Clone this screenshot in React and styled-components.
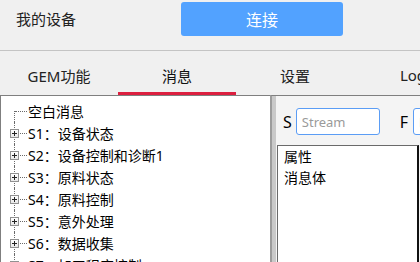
import styled, { createGlobalStyle } from "styled-components";

const GlobalStyle = createGlobalStyle`
  html, body {
    margin: 0;
    padding: 0;
    width: 420px;
    height: 262px;
    overflow: hidden;
    background: #f0f0f0;
  }

  body {
    font-family: "Noto Sans", "Noto Sans CJK SC", sans-serif;
    color: #000;
  }

  * {
    box-sizing: border-box;
  }
`;

const Page = styled.div`
  width: 420px;
  height: 262px;
  display: flex;
  flex-direction: column;
  overflow: hidden;
`;

const Header = styled.div`
  height: 51px;
  flex-shrink: 0;
  display: flex;
  align-items: flex-start;
  padding: 2px 0 0 16px;
  border-bottom: 1px solid #c4c4c4;
`;

const Title = styled.div`
  width: 165px;
  height: 34px;
  line-height: 34px;
  font-size: 15px;
  color: #222;
`;

const ConnectButton = styled.button`
  width: 162px;
  height: 34px;
  border: none;
  border-radius: 3px;
  background: #52a2ff;
  color: #fff;
  font-family: inherit;
  font-size: 16px;
  cursor: pointer;
`;

const Tabs = styled.div`
  height: 44px;
  flex-shrink: 0;
  display: flex;
`;

const Tab = styled.div`
  width: 118px;
  flex-shrink: 0;
  display: flex;
  justify-content: center;
  padding-top: 14px;
  font-size: 15px;
  color: ${(p) => (p.$active ? "#111" : "#222")};
  border-bottom: 3px solid ${(p) => (p.$active ? "#dc1f3f" : "transparent")};
`;

const Body = styled.div`
  flex: 1;
  display: flex;
  min-height: 0;
`;

const Tree = styled.div`
  width: 270px;
  flex-shrink: 0;
  background: #fff;
  border-top: 1px solid #7f7f7f;
  border-left: 1px solid #7f7f7f;
  padding: 4px 0 0 9px;
  overflow: hidden;
`;

const Row = styled.div`
  height: 22px;
  display: flex;
  align-items: center;
  font-size: 14px;
  white-space: nowrap;
`;

const Gutter = styled.div`
  position: relative;
  width: 18px;
  height: 22px;
  flex-shrink: 0;

  &::before {
    content: "";
    position: absolute;
    left: 4px;
    top: ${(p) => (p.$first ? "11px" : "0")};
    bottom: 0;
    border-left: 1px dotted #6a6a6a;
  }

  &::after {
    content: "";
    position: absolute;
    left: 5px;
    width: 12px;
    top: 11px;
    border-top: 1px dotted #6a6a6a;
  }
`;

const Expander = styled.span`
  position: absolute;
  left: 0;
  top: 7px;
  width: 9px;
  height: 9px;
  border: 1px solid #919191;
  background: linear-gradient(#fff, #e8e8e8);
  z-index: 1;

  &::before {
    content: "";
    position: absolute;
    left: 1px;
    top: 3px;
    width: 5px;
    height: 1px;
    background: #222;
  }

  &::after {
    content: "";
    position: absolute;
    left: 3px;
    top: 1px;
    width: 1px;
    height: 5px;
    background: #222;
  }
`;

const Splitter = styled.div`
  width: 6px;
  flex-shrink: 0;
  border-left: 2px solid #9c9c9c;
  background: #c9c9c9;
  border-top: 1px solid #7f7f7f;
`;

const Side = styled.div`
  flex: 1;
  min-width: 0;
  background: #f4f4f4;
  border-top: 1px solid #7f7f7f;
  padding: 12px 0 0 1px;
  display: flex;
  flex-direction: column;
  gap: 10px;
`;

const FieldRow = styled.div`
  display: flex;
  align-items: center;
  padding-left: 6px;
  white-space: nowrap;
`;

const Label = styled.span`
  font-size: 16px;
  margin-right: ${(p) => p.$gap}px;
`;

const Input = styled.input`
  width: 84px;
  height: 27px;
  flex-shrink: 0;
  border: 1px solid #5b9df5;
  border-radius: 3px;
  background: #fff;
  padding: 0 5px;
  font-family: inherit;
  font-size: 13px;
  outline: none;
  margin-right: ${(p) => p.$gap || 0}px;

  &::placeholder {
    color: #9a9a9a;
  }
`;

const List = styled.div`
  width: 142px;
  flex: 1;
  background: #fff;
  border: 1px solid #6a6a6a;
  border-right: 2px solid #111;
  border-bottom: none;
  padding: 0 6px;
`;

const ListItem = styled.div`
  height: 21px;
  line-height: 21px;
  font-size: 14px;
`;

const tabs = ["GEM功能", "消息", "设置", "Log"];

const nodes = [
  "S1：设备状态",
  "S2：设备控制和诊断1",
  "S3：原料状态",
  "S4：原料控制",
  "S5：意外处理",
  "S6：数据收集",
  "S7：加工程序控制",
];

export default function App() {
  return (
    <>
      <GlobalStyle />
      <Page>
        <Header>
          <Title>我的设备</Title>
          <ConnectButton>连接</ConnectButton>
        </Header>

        <Tabs>
          {tabs.map((t) => (
            <Tab key={t} $active={t === "消息"}>
              {t}
            </Tab>
          ))}
        </Tabs>

        <Body>
          <Tree>
            <Row>
              <Gutter $first />
              <span>空白消息</span>
            </Row>
            {nodes.map((n) => (
              <Row key={n}>
                <Gutter>
                  <Expander />
                </Gutter>
                <span>{n}</span>
              </Row>
            ))}
          </Tree>

          <Splitter />

          <Side>
            <FieldRow>
              <Label $gap={4}>S</Label>
              <Input placeholder="Stream" $gap={20} />
              <Label $gap={5}>F</Label>
              <Input placeholder="Function" />
            </FieldRow>
            <List>
              <ListItem>属性</ListItem>
              <ListItem>消息体</ListItem>
            </List>
          </Side>
        </Body>
      </Page>
    </>
  );
}
